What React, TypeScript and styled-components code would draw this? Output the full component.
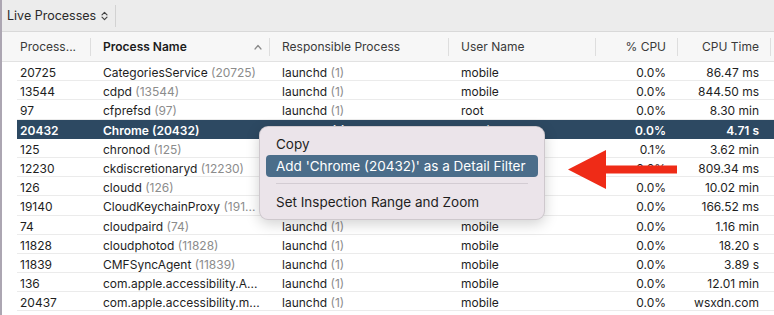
import React from "react";
import styled, { createGlobalStyle, css } from "styled-components";

const GlobalStyle = createGlobalStyle`
  html, body { margin: 0; padding: 0; background: #ffffff; }
  body { font-family: Inter, "Liberation Sans", Arial, sans-serif; -webkit-font-smoothing: antialiased; }
  * { box-sizing: border-box; }
`;

const COLS = "74px 179px 179px 147px 82px 93px 1fr";

const Window = styled.div`
  position: relative;
  width: 774px;
  height: 315px;
  overflow: hidden;
  display: flex;
  flex-direction: column;
  border-left: 2px solid #aca6b2;
  background: #ffffff;
  color: #1e1e1e;
  font-size: 12px;
`;

const Toolbar = styled.div`
  height: 32px;
  flex: none;
  display: flex;
  align-items: center;
  padding-left: 5px;
  background: #ececec;
  border-bottom: 1px solid #d9d9d9;
`;

const ScopeButton = styled.div`
  display: flex;
  align-items: center;
  gap: 5px;
  font-size: 12.5px;
  color: #2a2a2a;
  padding-right: 7px;
  height: 22px;
  border-right: 1px solid #d2d2d2;
`;

const Header = styled.div`
  height: 30px;
  flex: none;
  display: grid;
  grid-template-columns: ${COLS};
  padding-left: 15px;
  background: #f7f7f7;
  border-bottom: 1px solid #e2e2e2;
`;

const HeadCell = styled.div<{ $right?: boolean; $bold?: boolean; $first?: boolean; $sep?: boolean }>`
  position: relative;
  display: flex;
  align-items: center;
  justify-content: ${(p) => (p.$right ? "flex-end" : "flex-start")};
  padding: ${(p) => (p.$first ? "0 0 0 3px" : p.$right ? "0 12px 0 0" : "0 0 0 12px")};
  font-size: 12px;
  font-weight: ${(p) => (p.$bold ? 600 : 400)};
  color: ${(p) => (p.$bold ? "#1c1c1c" : "#3a3a3a")};
  white-space: nowrap;
  ${(p) =>
    p.$sep &&
    css`
      &::after {
        content: "";
        position: absolute;
        right: 0;
        top: 6px;
        bottom: 5px;
        width: 1px;
        background: #dedede;
      }
    `}
`;

const SortCaret = styled.svg`
  position: absolute;
  right: 8px;
  top: 12px;
`;

const Body = styled.div`
  flex: 1;
  display: flex;
  flex-direction: column;
`;

const Row = styled.div<{ $selected?: boolean }>`
  height: 19.2px;
  flex: none;
  margin-left: 15px;
  display: grid;
  grid-template-columns: ${COLS};
  align-items: center;
  padding-top: 3px;
  border-bottom: 1px solid #ebebeb;
  font-size: 12px;
  color: #1e1e1e;
  ${(p) =>
    p.$selected &&
    css`
      background: #2d4962;
      color: #ffffff;
      font-weight: 600;
      border-bottom-color: #2d4962;
    `}
`;

const Cell = styled.div<{ $right?: boolean; $first?: boolean }>`
  white-space: nowrap;
  overflow: hidden;
  text-align: ${(p) => (p.$right ? "right" : "left")};
  padding: ${(p) => (p.$first ? "0 0 0 3px" : p.$right ? "0 12px 0 0" : "0 0 0 12px")};
`;

const Dim = styled.span<{ $selected?: boolean }>`
  color: ${(p) => (p.$selected ? "#ffffff" : "#8c8c8c")};
`;

const Menu = styled.div`
  position: absolute;
  left: 257px;
  top: 126px;
  width: 286px;
  height: 94px;
  padding: 6px 6px;
  border-radius: 9px;
  background: #ebe4ea;
  border: 1px solid rgba(0, 0, 0, 0.12);
  box-shadow: 0 4px 14px rgba(0, 0, 0, 0.18);
  display: flex;
  flex-direction: column;
  font-size: 13.5px;
  color: #1e1e1e;
`;

const MenuItem = styled.div<{ $active?: boolean }>`
  height: 22px;
  display: flex;
  align-items: center;
  padding: 0 10px;
  border-radius: 4px;
  white-space: nowrap;
  ${(p) =>
    p.$active &&
    css`
      background: #4b6d8a;
      color: #ffffff;
    `}
`;

const MenuSeparator = styled.div`
  height: 1px;
  margin: 6px 10px 7px;
  background: #d3ccd3;
`;

const Arrow = styled.svg`
  position: absolute;
  left: 563px;
  top: 148px;
`;

type Proc = {
  pid: string;
  name: string;
  namePid?: string;
  user: string;
  cpu: string;
  time: string;
  selected?: boolean;
};

const rows: Proc[] = [
  { pid: "20725", name: "CategoriesService", namePid: "(20725)", user: "mobile", cpu: "0.0%", time: "86.47 ms" },
  { pid: "13544", name: "cdpd", namePid: "(13544)", user: "mobile", cpu: "0.0%", time: "844.50 ms" },
  { pid: "97", name: "cfprefsd", namePid: "(97)", user: "root", cpu: "0.0%", time: "8.30 min" },
  { pid: "20432", name: "Chrome", namePid: "(20432)", user: "mobile", cpu: "0.0%", time: "4.71 s", selected: true },
  { pid: "125", name: "chronod", namePid: "(125)", user: "mobile", cpu: "0.1%", time: "3.62 min" },
  { pid: "12230", name: "ckdiscretionaryd", namePid: "(12230)", user: "mobile", cpu: "0.0%", time: "809.34 ms" },
  { pid: "126", name: "cloudd", namePid: "(126)", user: "mobile", cpu: "0.0%", time: "10.02 min" },
  { pid: "19140", name: "CloudKeychainProxy", namePid: "(191...", user: "mobile", cpu: "0.0%", time: "166.52 ms" },
  { pid: "74", name: "cloudpaird", namePid: "(74)", user: "mobile", cpu: "0.0%", time: "1.16 min" },
  { pid: "11828", name: "cloudphotod", namePid: "(11828)", user: "mobile", cpu: "0.0%", time: "18.20 s" },
  { pid: "11839", name: "CMFSyncAgent", namePid: "(11839)", user: "mobile", cpu: "0.0%", time: "3.89 s" },
  { pid: "136", name: "com.apple.accessibility.A...", user: "mobile", cpu: "0.0%", time: "12.01 min" },
  { pid: "20437", name: "com.apple.accessibility.m...", user: "mobile", cpu: "0.0%", time: "wsxdn.com" },
];

export default function App() {
  return (
    <>
      <GlobalStyle />
      <Window>
        <Toolbar>
          <ScopeButton>
            Live Processes
            <svg width="7" height="10" viewBox="0 0 7 10">
              <path d="M1 3.8 L3.5 1.3 L6 3.8 M1 6.2 L3.5 8.7 L6 6.2" fill="none" stroke="#444" strokeWidth="1.2" strokeLinecap="round" strokeLinejoin="round" />
            </svg>
          </ScopeButton>
        </Toolbar>
        <Header>
          <HeadCell $first $sep>Process...</HeadCell>
          <HeadCell $bold $sep>
            Process Name
            <SortCaret width="8" height="6" viewBox="0 0 8 6">
              <path d="M1 5 L4 1.5 L7 5" fill="none" stroke="#8a8a8a" strokeWidth="1.2" strokeLinecap="round" strokeLinejoin="round" />
            </SortCaret>
          </HeadCell>
          <HeadCell $sep>Responsible Process</HeadCell>
          <HeadCell $sep>User Name</HeadCell>
          <HeadCell $right $sep>% CPU</HeadCell>
          <HeadCell $right $sep>CPU Time</HeadCell>
          <HeadCell />
        </Header>
        <Body>
          {rows.map((r) => (
            <Row key={r.pid} $selected={r.selected}>
              <Cell $first>{r.pid}</Cell>
              <Cell>
                {r.name}
                {r.namePid && <Dim $selected={r.selected}> {r.namePid}</Dim>}
              </Cell>
              <Cell>
                launchd <Dim $selected={r.selected}>(1)</Dim>
              </Cell>
              <Cell>{r.user}</Cell>
              <Cell $right>{r.cpu}</Cell>
              <Cell $right>{r.time}</Cell>
              <Cell />
            </Row>
          ))}
        </Body>
        <Menu>
          <MenuItem>Copy</MenuItem>
          <MenuItem $active>Add 'Chrome (20432)' as a Detail Filter</MenuItem>
          <MenuSeparator />
          <MenuItem>Set Inspection Range and Zoom</MenuItem>
        </Menu>
        <Arrow width="116" height="44" viewBox="0 0 116 44">
          <path d="M3 21.5 L41 2 L41 17.5 L112 17.5 L112 25.5 L41 25.5 L41 41 Z" fill="#ef2b17" />
        </Arrow>
      </Window>
    </>
  );
}
